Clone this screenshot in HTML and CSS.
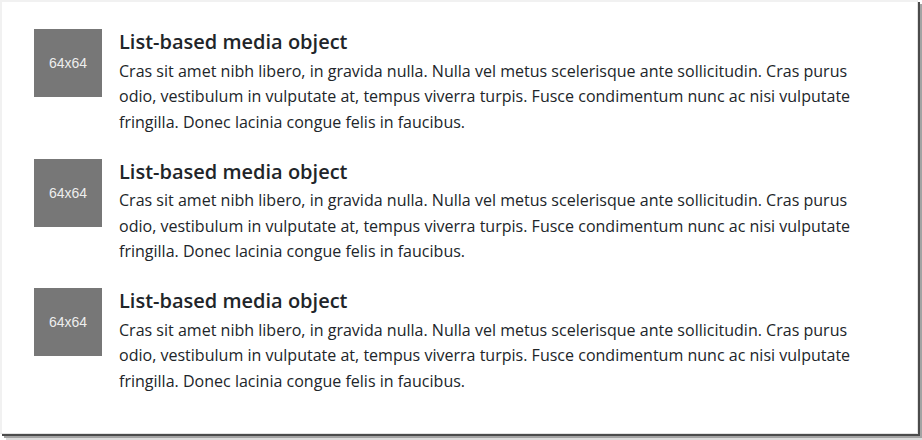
FILE: index.html
```html
<!DOCTYPE html>
<html lang="en">
<head>
<meta charset="utf-8">
<title>Media list</title>
<link rel="stylesheet" href="styles.css">
</head>
<body>
<div class="frame">
  <ul class="media-list">
    <li class="media">
      <div class="thumb">64x64</div>
      <div class="media-body">
        <h5 class="media-title">List-based media object</h5>
        <p class="media-text">Cras sit amet nibh libero, in gravida nulla. Nulla vel metus scelerisque ante sollicitudin. Cras purus odio, vestibulum in vulputate at, tempus viverra turpis. Fusce condimentum nunc ac nisi vulputate fringilla. Donec lacinia congue felis in faucibus.</p>
      </div>
    </li>
    <li class="media">
      <div class="thumb">64x64</div>
      <div class="media-body">
        <h5 class="media-title">List-based media object</h5>
        <p class="media-text">Cras sit amet nibh libero, in gravida nulla. Nulla vel metus scelerisque ante sollicitudin. Cras purus odio, vestibulum in vulputate at, tempus viverra turpis. Fusce condimentum nunc ac nisi vulputate fringilla. Donec lacinia congue felis in faucibus.</p>
      </div>
    </li>
    <li class="media">
      <div class="thumb">64x64</div>
      <div class="media-body">
        <h5 class="media-title">List-based media object</h5>
        <p class="media-text">Cras sit amet nibh libero, in gravida nulla. Nulla vel metus scelerisque ante sollicitudin. Cras purus odio, vestibulum in vulputate at, tempus viverra turpis. Fusce condimentum nunc ac nisi vulputate fringilla. Donec lacinia congue felis in faucibus.</p>
      </div>
    </li>
  </ul>
</div>
</body>
</html>
```
FILE: styles.css
```css
html, body {
  margin: 0;
  padding: 0;
  background: #ffffff;
}

body {
  width: 922px;
  height: 440px;
  overflow: hidden;
}

.frame {
  box-sizing: border-box;
  width: 918px;
  height: 434px;
  background: #ffffff;
  border-top: 2px solid #f1f1f1;
  border-left: 2px solid #f1f1f1;
  border-right: 1px solid #e2e2e2;
  border-bottom: 1px solid #e2e2e2;
  box-shadow: 2px 2px 0 #4b4b4b, 4px 4px 0 #a3a3a3, 6px 6px 0 #dcdcdc;
}

.media-list {
  list-style: none;
  margin: 0;
  padding: 27px 0 0 32px;
  display: flex;
  flex-direction: column;
  gap: 23.5px;
}

.media {
  display: flex;
  align-items: flex-start;
  gap: 17px;
}

.thumb {
  flex: 0 0 68px;
  width: 68px;
  height: 68px;
  background: #777777;
  color: #eeeeee;
  font-family: "Liberation Sans", Arial, sans-serif;
  font-size: 14px;
  display: flex;
  align-items: center;
  justify-content: center;
}

.media-body {
  width: 745px;
  color: #212529;
  font-family: "Open Sans", "Noto Sans", sans-serif;
}

.media-title {
  margin: 0 0 4px;
  font-size: 20px;
  font-weight: 600;
  line-height: 25.5px;
}

.media-text {
  margin: 0;
  font-size: 16.05px;
  line-height: 25.5px;
}
```
